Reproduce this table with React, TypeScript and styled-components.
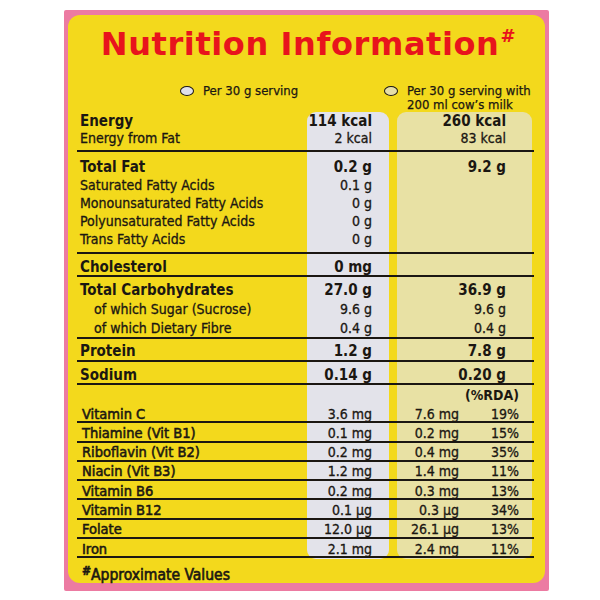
import React from 'react';
import styled, { createGlobalStyle } from 'styled-components';

const NARROW = `"Liberation Sans Narrow", "Arial Narrow", "DejaVu Sans Condensed", "Liberation Sans", sans-serif`;
const INK = '#1b1712';

const GlobalStyle = createGlobalStyle`
  html, body { margin: 0; padding: 0; background: #ffffff; }
  body { width: 600px; height: 600px; overflow: hidden; }
`;

const Page = styled.div`
  width: 600px;
  height: 600px;
  box-sizing: border-box;
  padding: 10px 51px 9px 64px;
  background: #ffffff;
`;

const Frame = styled.div`
  height: 100%;
  box-sizing: border-box;
  padding: 5px 4px 8px 4px;
  background: #ec7ba2;
  border-radius: 2px;
`;

const Card = styled.div`
  height: 100%;
  box-sizing: border-box;
  background: #f3d91c;
  border-radius: 12px;
  padding: 10px 11px 0 9px;
  display: flex;
  flex-direction: column;
  color: ${INK};
  font-family: ${NARROW};
`;

const Title = styled.h1`
  margin: 0;
  font-family: "DejaVu Sans", "Liberation Sans", sans-serif;
  font-weight: 700;
  font-size: 32px;
  line-height: 39px;
  color: #e8141c;
  text-align: center;
  letter-spacing: 0.6px;
  padding-left: 6px;
  sup {
    font-size: 18px;
    vertical-align: 13px;
    line-height: 0;
    margin-left: 1px;
  }
`;

const Rule = styled.div`
  height: 2px;
  background: ${INK};
  margin-top: 5px;
`;

const Legend = styled.div`
  display: flex;
  padding: 15px 0 0 103px;
  font-size: 13px;
  line-height: 14px;
  white-space: nowrap;
  -webkit-text-stroke: 0.25px ${INK};
`;

const LegendItem = styled.div<{ $w?: number }>`
  display: flex;
  align-items: flex-start;
  width: ${(p) => (p.$w ? `${p.$w}px` : 'auto')};
`;

const Oval = styled.span<{ $tone: string }>`
  flex: none;
  width: 12px;
  height: 8px;
  margin: 2px 9px 0 0;
  border: 1.5px solid ${INK};
  border-radius: 50%;
  background: ${(p) => p.$tone};
`;

const Table = styled.div`
  display: grid;
  grid-template-areas: 'stack';
  > * { grid-area: stack; }
`;

const COLS = '230px 82px 8px 135px';

const Backdrop = styled.div`
  display: grid;
  grid-template-columns: ${COLS};
`;

const Panel = styled.div<{ $col: number; $tone: string }>`
  grid-column: ${(p) => p.$col};
  background: ${(p) => p.$tone};
  border-radius: 9px;
  margin-bottom: -1px;
`;

const Rows = styled.div`
  display: flex;
  flex-direction: column;
`;

const Section = styled.div<{ $pt: number; $pb: number }>`
  padding: ${(p) => p.$pt}px 0 ${(p) => p.$pb}px;
  border-bottom: 2px solid ${INK};
`;

const Row = styled.div<{ $h: number }>`
  display: grid;
  grid-template-columns: ${COLS};
  height: ${(p) => p.$h}px;
  line-height: ${(p) => p.$h + 2}px;
  white-space: nowrap;
`;

const Label = styled.div<{ $bold?: boolean; $indent?: boolean }>`
  padding-left: ${(p) => (p.$indent ? 17 : 3)}px;
  font-weight: ${(p) => (p.$bold ? 700 : 400)};
  font-size: ${(p) => (p.$bold ? 15 : 14)}px;
  -webkit-text-stroke: ${(p) => (p.$bold ? 0 : 0.3)}px ${INK};
`;

const Value = styled.div<{ $bold?: boolean; $pr: number; $col: number }>`
  grid-column: ${(p) => p.$col};
  text-align: right;
  padding-right: ${(p) => p.$pr}px;
  font-weight: ${(p) => (p.$bold ? 700 : 400)};
  font-size: ${(p) => (p.$bold ? 15 : 14)}px;
  -webkit-text-stroke: ${(p) => (p.$bold ? 0 : 0.3)}px ${INK};
`;

const VIT_COLS = '230px 82px 8px 62px 73px';

const VitRow = styled.div`
  display: grid;
  grid-template-columns: ${VIT_COLS};
  height: 17.3px;
  border-bottom: 2px solid ${INK};
  white-space: nowrap;
  font-size: 14px;
  -webkit-text-stroke: 0.3px ${INK};
  > * {
    padding-top: 1.5px;
    line-height: 17.3px;
  }
`;

const VitLabel = styled.div`
  padding-left: 5px;
  font-size: 14.5px;
  -webkit-text-stroke: 0.55px ${INK};
`;

const VitValue = styled.div<{ $col: number; $pr: number }>`
  grid-column: ${(p) => p.$col};
  text-align: right;
  padding-right: ${(p) => p.$pr}px;
`;

const RdaRow = styled.div`
  display: grid;
  grid-template-columns: ${VIT_COLS};
  height: 19px;
  line-height: 20px;
`;

const RdaHead = styled.div`
  grid-column: 4 / 6;
  text-align: right;
  padding-right: 13px;
  font-weight: 700;
  font-size: 14px;
`;

const Footnote = styled.div`
  padding: 9px 0 0 5px;
  font-size: 15.5px;
  line-height: 17px;
  -webkit-text-stroke: 0.6px ${INK};
  sup {
    font-size: 12px;
    font-weight: 700;
    vertical-align: 5px;
    line-height: 0;
  }
`;

type R = { label: string; v1?: string; v2?: string; bold?: boolean; indent?: boolean; h?: number };
type S = { pt: number; pb: number; rows: R[] };

const sections: S[] = [
  {
    pt: 0,
    pb: 4,
    rows: [
      { label: 'Energy', v1: '114 kcal', v2: '260 kcal', bold: true, h: 16 },
      { label: 'Energy from Fat', v1: '2 kcal', v2: '83 kcal' },
    ],
  },
  {
    pt: 5,
    pb: 5,
    rows: [
      { label: 'Total Fat', v1: '0.2 g', v2: '9.2 g', bold: true },
      { label: 'Saturated Fatty Acids', v1: '0.1 g' },
      { label: 'Monounsaturated Fatty Acids', v1: '0 g' },
      { label: 'Polyunsaturated Fatty Acids', v1: '0 g' },
      { label: 'Trans Fatty Acids', v1: '0 g' },
    ],
  },
  { pt: 3, pb: 0, rows: [{ label: 'Cholesterol', v1: '0 mg', bold: true }] },
  {
    pt: 3,
    pb: 0,
    rows: [
      { label: 'Total Carbohydrates', v1: '27.0 g', v2: '36.9 g', bold: true, h: 19 },
      { label: 'of which Sugar (Sucrose)', v1: '9.6 g', v2: '9.6 g', indent: true, h: 19 },
      { label: 'of which Dietary Fibre', v1: '0.4 g', v2: '0.4 g', indent: true, h: 19 },
    ],
  },
  { pt: 2, pb: 1, rows: [{ label: 'Protein', v1: '1.2 g', v2: '7.8 g', bold: true }] },
  { pt: 3, pb: 0, rows: [{ label: 'Sodium', v1: '0.14 g', v2: '0.20 g', bold: true }] },
];

const vitamins: [string, string, string, string][] = [
  ['Vitamin C', '3.6 mg', '7.6 mg', '19%'],
  ['Thiamine (Vit B1)', '0.1 mg', '0.2 mg', '15%'],
  ['Riboflavin (Vit B2)', '0.2 mg', '0.4 mg', '35%'],
  ['Niacin (Vit B3)', '1.2 mg', '1.4 mg', '11%'],
  ['Vitamin B6', '0.2 mg', '0.3 mg', '13%'],
  ['Vitamin B12', '0.1 µg', '0.3 µg', '34%'],
  ['Folate', '12.0 µg', '26.1 µg', '13%'],
  ['Iron', '2.1 mg', '2.4 mg', '11%'],
];

export default function App() {
  return (
    <>
      <GlobalStyle />
      <Page>
        <Frame>
          <Card>
            <Title>
              Nutrition Information<sup>#</sup>
            </Title>
            <Rule />
            <Legend>
              <LegendItem $w={204}>
                <Oval $tone="#dfe0ea" />
                <span>Per 30 g serving</span>
              </LegendItem>
              <LegendItem>
                <Oval $tone="#e6dea6" />
                <span>
                  Per 30 g serving with
                  <br />
                  200 ml cow’s milk
                </span>
              </LegendItem>
            </Legend>
            <Table>
              <Backdrop>
                <Panel $col={2} $tone="#e3e3ea" />
                <Panel $col={4} $tone="#e8e1a4" />
              </Backdrop>
              <Rows>
                {sections.map((s, i) => (
                  <Section key={i} $pt={s.pt} $pb={s.pb}>
                    {s.rows.map((r) => (
                      <Row key={r.label} $h={r.h ?? 18}>
                        <Label $bold={r.bold} $indent={r.indent}>
                          {r.label}
                        </Label>
                        <Value $col={2} $pr={17} $bold={r.bold}>
                          {r.v1}
                        </Value>
                        <Value $col={4} $pr={26} $bold={r.bold}>
                          {r.v2}
                        </Value>
                      </Row>
                    ))}
                  </Section>
                ))}
                <RdaRow>
                  <RdaHead>(%RDA)</RdaHead>
                </RdaRow>
                {vitamins.map(([name, a, b, pct]) => (
                  <VitRow key={name}>
                    <VitLabel>{name}</VitLabel>
                    <VitValue $col={2} $pr={17}>
                      {a}
                    </VitValue>
                    <VitValue $col={4} $pr={0}>
                      {b}
                    </VitValue>
                    <VitValue $col={5} $pr={13}>
                      {pct}
                    </VitValue>
                  </VitRow>
                ))}
              </Rows>
            </Table>
            <Footnote>
              <sup>#</sup>Approximate Values
            </Footnote>
          </Card>
        </Frame>
      </Page>
    </>
  );
}
